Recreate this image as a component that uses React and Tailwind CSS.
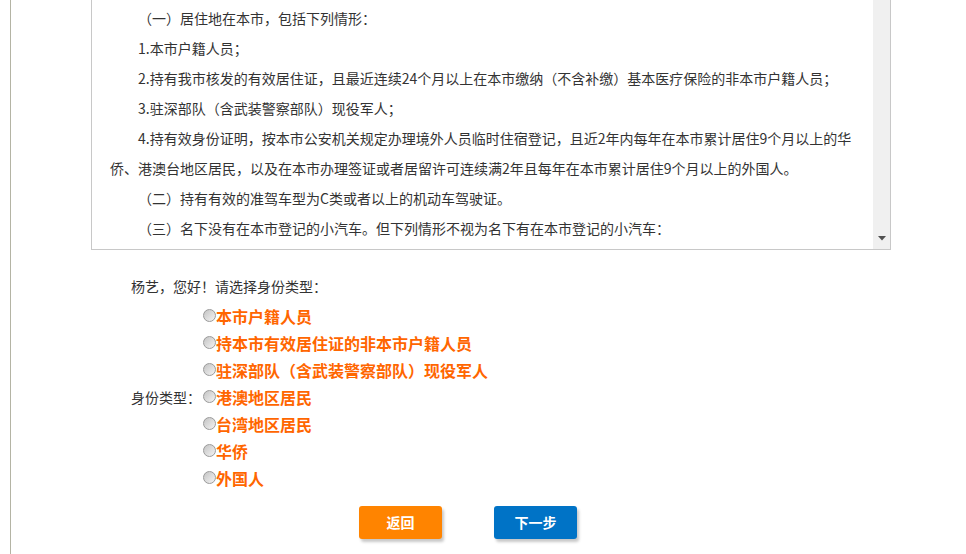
import { useState } from 'react';

const rules = [
  '（一）居住地在本市，包括下列情形：',
  '1.本市户籍人员；',
  '2.持有我市核发的有效居住证，且最近连续24个月以上在本市缴纳（不含补缴）基本医疗保险的非本市户籍人员；',
  '3.驻深部队（含武装警察部队）现役军人；',
  '4.持有效身份证明，按本市公安机关规定办理境外人员临时住宿登记，且近2年内每年在本市累计居住9个月以上的华侨、港澳台地区居民，以及在本市办理签证或者居留许可连续满2年且每年在本市累计居住9个月以上的外国人。',
  '（二）持有有效的准驾车型为C类或者以上的机动车驾驶证。',
  '（三）名下没有在本市登记的小汽车。但下列情形不视为名下有在本市登记的小汽车：',
];

const types = [
  '本市户籍人员',
  '持本市有效居住证的非本市户籍人员',
  '驻深部队（含武装警察部队）现役军人',
  '港澳地区居民',
  '台湾地区居民',
  '华侨',
  '外国人',
];

const App = () => {
  const [selected, setSelected] = useState(null);

  return (
    <div className="bg-white min-h-screen pl-[10px] font-['Noto_Sans_CJK_SC',sans-serif] text-[#333]">
      <div className="border-l border-[#b4b4a4] min-h-[554px] pl-[80px]">

        {/* ════ NOTICE BOX ════ */}
        <div className="w-[800px] h-[250px] border-x border-b border-[#c8c8c8] flex">
          <div className="flex-1 overflow-hidden pl-[18px] pr-[16px] pt-[3px] text-[14px] leading-[30px]">
            {rules.map((r, i) => (
              <p key={i} className="indent-[2em]">{r}</p>
            ))}
          </div>
          <div className="w-[17px] bg-[#f0f0f0] flex flex-col justify-end items-center pb-[8px]">
            <svg width="8" height="5" viewBox="0 0 8 5">
              <path d="M0 0 H8 L4 4.5 Z" fill="#505050" />
            </svg>
          </div>
        </div>

        {/* ════ GREETING ════ */}
        <p className="mt-[21px] pl-[40px] text-[14px] leading-[30px]">杨艺，您好！请选择身份类型：</p>

        {/* ════ TYPE SELECT ════ */}
        <div className="mt-[1px] pl-[40px] flex items-center">
          <span className="w-[72px] text-[14px] leading-[20px]">身份类型：</span>
          <div className="flex flex-col">
            {types.map((t, i) => (
              <label
                key={t}
                className="h-[27px] flex items-center cursor-pointer"
                onClick={() => setSelected(i)}
              >
                <span className="w-[13px] h-[13px] rounded-full border border-[#9a9a9a] bg-gradient-to-br from-[#c4c4c4] to-[#f4f4f4] flex items-center justify-center">
                  {selected === i && <span className="w-[5px] h-[5px] rounded-full bg-[#333]" />}
                </span>
                <span className="text-[16px] font-bold text-[#ff6600] leading-[20px]">{t}</span>
              </label>
            ))}
          </div>
        </div>

        {/* ════ ACTIONS ════ */}
        <div className="mt-[15px] pl-[268px] flex gap-[52px]">
          <button className="w-[83px] h-[33px] rounded-[3px] bg-[#ff8400] text-white text-[14px] font-bold shadow-[2px_3px_3px_rgba(0,0,0,0.22)]">
            返回
          </button>
          <button className="w-[83px] h-[33px] rounded-[3px] bg-[#0073c6] text-white text-[14px] font-bold shadow-[2px_3px_3px_rgba(0,0,0,0.22)]">
            下一步
          </button>
        </div>
      </div>
    </div>
  );
};

export default App;
